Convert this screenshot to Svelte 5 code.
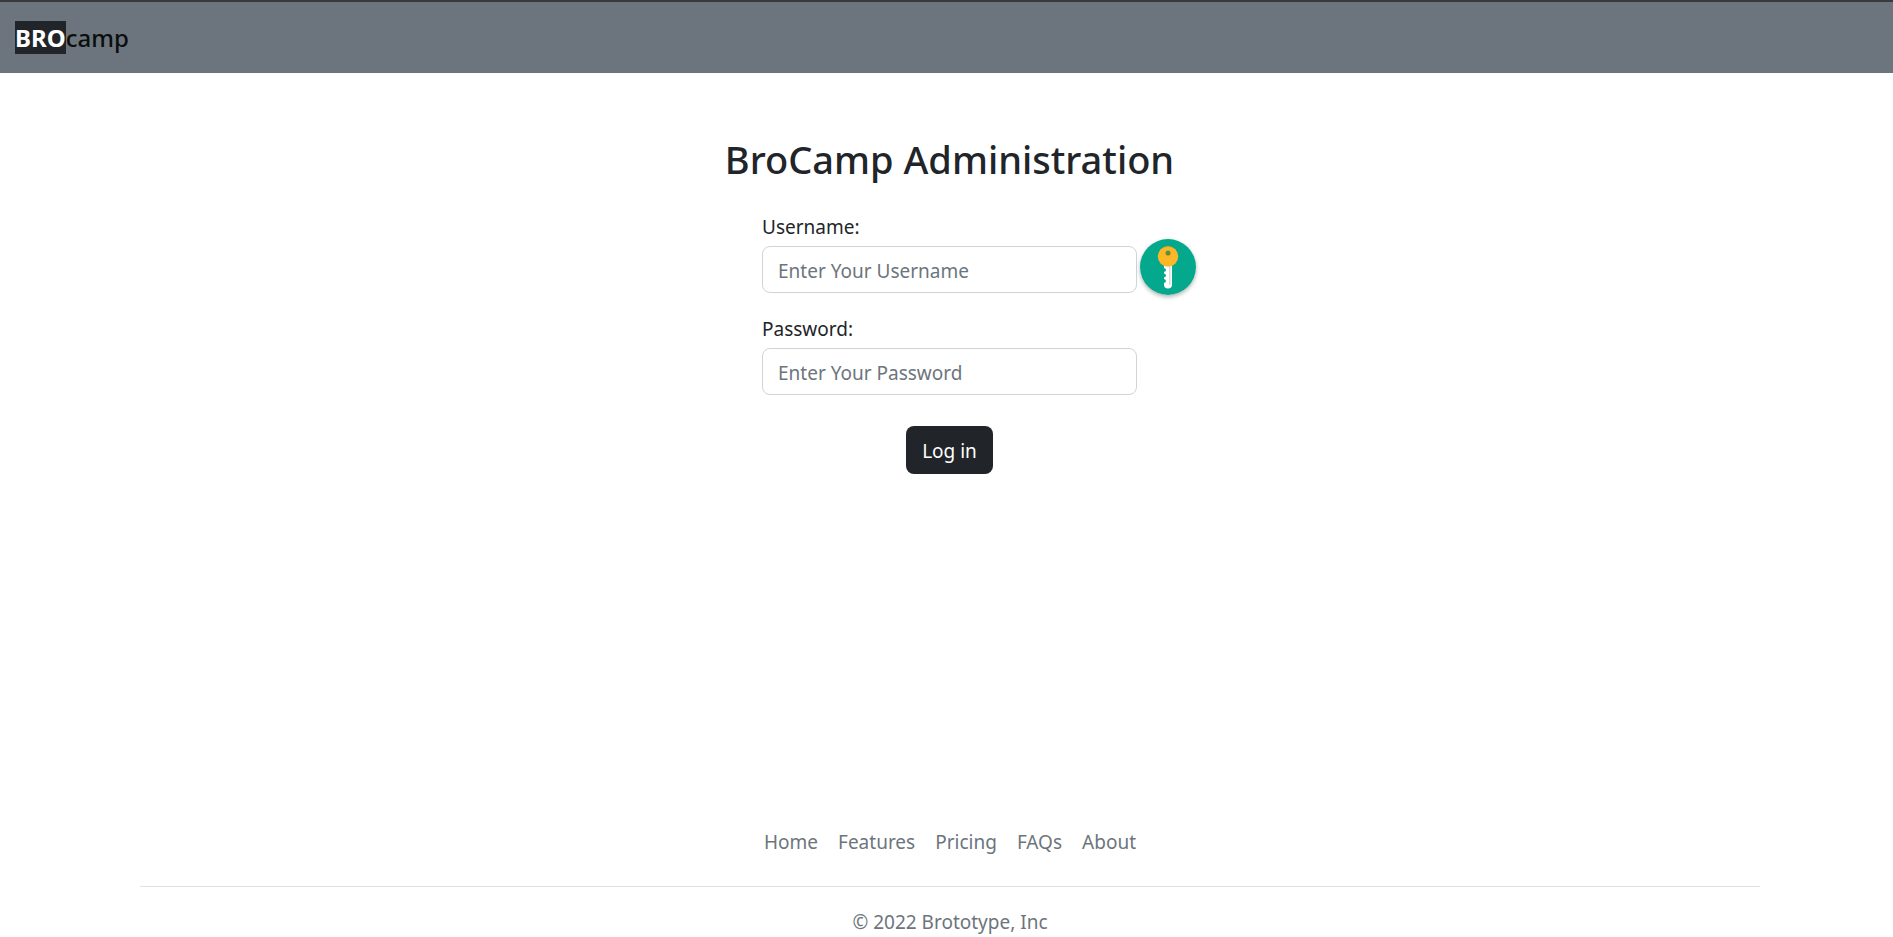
<script>
  const links = ['Home', 'Features', 'Pricing', 'FAQs', 'About'];
  let username = $state('');
  let password = $state('');
</script>

<div class="page">
  <header>
    <a class="brand" href="#home"><span class="mark">BRO</span>camp</a>
  </header>

  <main>
    <h1>BroCamp Administration</h1>
    <form onsubmit={(event) => event.preventDefault()}>
      <label for="username">Username:</label>
      <div class="field">
        <input id="username" type="text" placeholder="Enter Your Username" bind:value={username} />
        <button class="key" type="button" aria-label="Fill in saved login">
          <svg viewBox="0 0 56 56" width="56" height="56" aria-hidden="true">
            <circle cx="28" cy="28" r="28" fill="#04a88c" />
            <path d="M24 25h8v20.500q0 4-4 4t-4-4v-1.500q2-.5 2-2t-2-2v-1.500q2-.5 2-2t-2-2v-1.500q2-.5 2-2t-2-2z" fill="#fff" />
            <path d="M29 27h1.500v19h-1.500z" fill="#cfe0dd" />
            <circle cx="28" cy="17.500" r="10.200" fill="#fbb726" />
            <path d="M20 11.200a10.200 10.200 0 0 1 16 0a11.500 11.500 0 0 0-16 0z" fill="#c9a52f" />
            <circle cx="28" cy="14" r="2.500" fill="#5b8d3d" />
          </svg>
        </button>
      </div>
      <label for="password">Password:</label>
      <div class="field">
        <input id="password" type="password" placeholder="Enter Your Password" bind:value={password} />
      </div>
      <button class="submit" type="submit">Log in</button>
    </form>
  </main>

  <footer>
    <nav>
      {#each links as link}
        <a href="#{link.toLowerCase()}">{link}</a>
      {/each}
    </nav>
    <p>© 2022 Brototype, Inc</p>
  </footer>
</div>

<style>
  :global(body) {
    background: #fff;
  }

  .page {
    display: flex;
    flex-direction: column;
    box-sizing: border-box;
    min-height: 100vh;
    color: #212529;
    font-family: 'Segoe UI', 'Noto Sans', sans-serif;
    font-size: 19px;
    line-height: 30px;
  }

  header {
    display: flex;
    align-items: center;
    box-sizing: border-box;
    height: 73px;
    padding: 0 15px;
    border-top: 2px solid #3a3a3a;
    background: #6c757d;
  }

  .brand {
    color: #0b0d0e;
    font-size: 24px;
    font-weight: 500;
    line-height: 33px;
    text-decoration: none;
  }

  .mark {
    display: inline-block;
    background: #212529;
    color: #fff;
    font-weight: 700;
  }

  main {
    display: flex;
    flex-direction: column;
    align-items: center;
    padding: 62px 0 40px 6px;
  }

  h1 {
    margin: 0 0 29px;
    font-size: 38px;
    font-weight: 500;
    line-height: 48px;
  }

  form {
    display: flex;
    flex-direction: column;
    width: 375px;
    max-width: 100%;
  }

  label {
    margin-bottom: 4px;
  }

  .field {
    position: relative;
    margin-bottom: 21px;
  }

  input {
    display: block;
    box-sizing: border-box;
    width: 100%;
    height: 47px;
    padding: 9px 15px 7px;
    border: 1px solid #ced4da;
    border-radius: 8px;
    background: #fff;
    color: #212529;
    font: inherit;
  }

  input::placeholder {
    color: #6c757d;
    opacity: 1;
  }

  .key {
    position: absolute;
    top: -7px;
    left: calc(100% + 3px);
    width: 56px;
    height: 56px;
    padding: 0;
    border: 0;
    border-radius: 50%;
    background: none;
    box-shadow: 0 2px 4px rgba(0, 0, 0, 0.3);
    cursor: pointer;
  }

  .key svg {
    display: block;
  }

  .submit {
    align-self: center;
    height: 48px;
    margin-top: 10px;
    padding: 2px 16px 0;
    border: 0;
    border-radius: 8px;
    background: #212529;
    color: #fff;
    font: inherit;
    cursor: pointer;
  }

  footer {
    margin: auto 133px 0 140px;
    color: #6c757d;
    text-align: center;
  }

  nav {
    display: flex;
    justify-content: center;
    gap: 20px;
    padding-bottom: 29px;
    border-bottom: 1px solid #dee2e6;
  }

  nav a {
    color: inherit;
    text-decoration: none;
  }

  p {
    margin: 20px 0 0;
  }
</style>
